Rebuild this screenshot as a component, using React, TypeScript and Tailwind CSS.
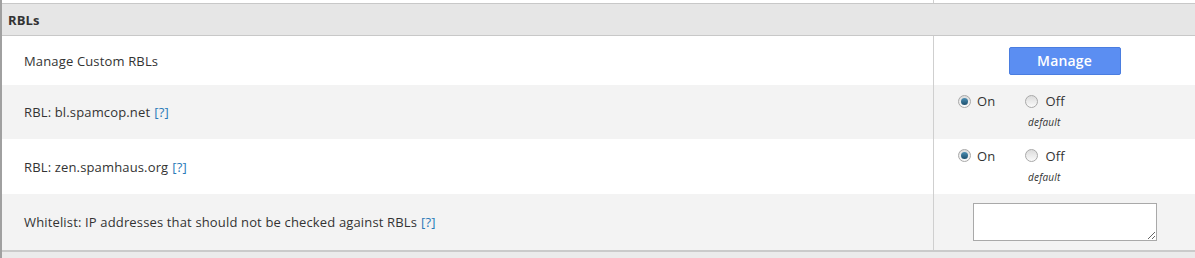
import { useState } from 'react';

function Help() {
  return <a href="#" className="ml-1 text-[#2a7ab8]">[?]</a>;
}

function Radio({ checked }: { checked: boolean }) {
  return (
    <span className="inline-flex h-[13px] w-[13px] items-center justify-center rounded-full border border-[#a9a9a9] bg-gradient-to-b from-[#dcdcdc] to-[#fafafa]">
      {checked && (
        <span className="h-[7px] w-[7px] rounded-full bg-gradient-to-b from-[#4d8fb3] to-[#1b4f6e]" />
      )}
    </span>
  );
}

function OnOff() {
  const [on, setOn] = useState(true);
  return (
    <div className="flex flex-col pb-[4px] pl-6">
      <div className="flex h-[18px] items-center">
        <label className="flex cursor-pointer items-center" onClick={() => setOn(true)}>
          <Radio checked={on} />
          <span className="ml-[6px] text-[13px] leading-[18px]">On</span>
        </label>
        <label className="ml-[30px] flex cursor-pointer items-center" onClick={() => setOn(false)}>
          <Radio checked={!on} />
          <span className="ml-[7px] text-[13px] leading-[18px]">Off</span>
        </label>
      </div>
      <span className="ml-[70px] mt-[6px] text-[10px] italic leading-[12px] tracking-[0.2px] text-[#333]">default</span>
    </div>
  );
}

function Row({ label, right, bg, h }: { label: React.ReactNode; right: React.ReactNode; bg: string; h: string }) {
  return (
    <div className={`flex ${bg} ${h}`}>
      <div className="flex w-[931px] items-center pl-[22px]">{label}</div>
      <div className="flex flex-1 items-center border-l border-[#cfcfcf]">{right}</div>
    </div>
  );
}

export default function App() {
  return (
    <div
      className="h-[258px] w-[1195px] overflow-hidden border-l-2 border-[#a0a0a0] bg-white text-[13px] leading-[18px] tracking-[0.15px] text-[#333]"
      style={{ fontFamily: '"Open Sans", sans-serif' }}
    >
      <div className="flex h-[3px]">
        <div className="w-[931px]" />
        <div className="flex-1 border-l border-[#cfcfcf]" />
      </div>
      <div className="flex h-[33px] items-center border-y border-[#c8c8c8] bg-[#e6e6e6] pl-[6px] text-[13px] font-bold text-[#333]">
        RBLs
      </div>
      <Row
        bg="bg-white"
        h="h-[49px]"
        label={<span>Manage Custom RBLs</span>}
        right={
          <div className="flex flex-1 justify-center">
            <button className="h-[28px] w-[112px] rounded-[2px] border border-[#4a7de0] bg-[#5b8ef2] text-[14px] font-semibold text-white">
              Manage
            </button>
          </div>
        }
      />
      <Row
        bg="bg-[#f3f3f3]"
        h="h-[54px]"
        label={<span>RBL: bl.spamcop.net<Help /></span>}
        right={<OnOff />}
      />
      <Row
        bg="bg-white"
        h="h-[55px]"
        label={<span>RBL: zen.spamhaus.org<Help /></span>}
        right={<OnOff />}
      />
      <Row
        bg="bg-[#f3f3f3]"
        h="h-[56px]"
        label={<span>Whitelist: IP addresses that should not be checked against RBLs<Help /></span>}
        right={
          <div className="flex flex-1 justify-center">
            <textarea className="h-[38px] w-[184px] border border-[#a9a9a9] bg-white" />
          </div>
        }
      />
      <div className="h-[2px] bg-[#cacaca]" />
      <div className="h-[6px] bg-[#ebebeb]" />
    </div>
  );
}
